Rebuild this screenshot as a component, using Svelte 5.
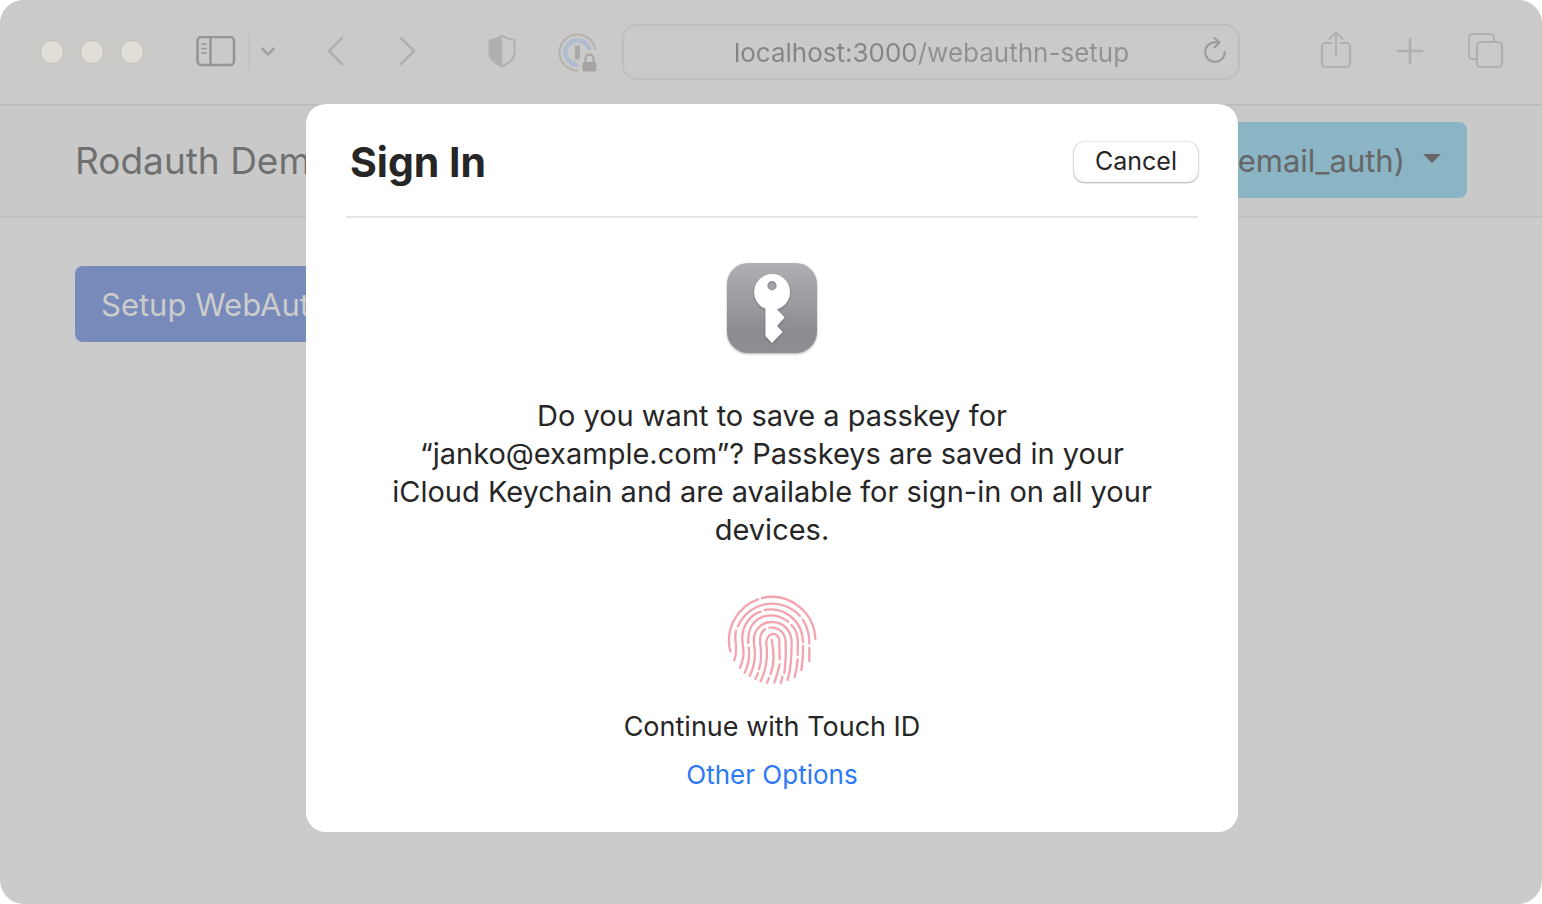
<script>
  let account = 'janko@example.com';
</script>

<div class="window">
  <header class="toolbar">
    <div class="lights"><i></i><i></i><i></i></div>
    <button class="tool sidebar" aria-label="Show sidebar">
      <svg width="40" height="32" viewBox="0 0 40 32" fill="none" stroke="currentColor" stroke-linecap="round">
        <rect x="1.5" y="1" width="36.500" height="28" rx="4" stroke-width="2.6" />
        <path d="M14.500 1.500v27" stroke-width="2.400" />
        <path d="M6 8h4M6 12.500h4M6 17h4" stroke-width="1.700" />
      </svg>
    </button>
    <span class="rule"></span>
    <button class="tool groups" aria-label="Tab groups">
      <svg width="16" height="12" viewBox="0 0 16 12" fill="none" stroke="currentColor" stroke-width="2.800" stroke-linecap="round" stroke-linejoin="round"><path d="M2.500 3 8 8.500 13.500 3" /></svg>
    </button>
    <button class="tool back" aria-label="Back">
      <svg width="20" height="32" viewBox="0 0 20 32" fill="none" stroke="currentColor" stroke-width="2.600" stroke-linecap="round" stroke-linejoin="round"><path d="M16 3 3 16l13 13" /></svg>
    </button>
    <button class="tool forward" aria-label="Forward">
      <svg width="20" height="32" viewBox="0 0 20 32" fill="none" stroke="currentColor" stroke-width="2.600" stroke-linecap="round" stroke-linejoin="round"><path d="m4 3 13 13L4 29" /></svg>
    </button>
    <button class="tool shield" aria-label="Privacy report">
      <svg width="28" height="34" viewBox="0 0 28 34">
        <path d="M14 1.500C17 4 22 5.300 25.500 6q1 .3 1 1.500v12c0 6-6 9.500-12.500 13C7.500 29 1.500 25.500 1.500 19.500v-12Q1.500 6.300 2.500 6C6 5.300 11 4 14 1.500z" fill="none" stroke="currentColor" stroke-width="2" stroke-linejoin="round" />
        <path d="M14 1.500v31C7.500 29 1.500 25.500 1.500 19.500v-12Q1.500 6.300 2.500 6C6 5.300 11 4 14 1.500z" fill="currentColor" />
      </svg>
    </button>
    <button class="tool pass" aria-label="Password manager, locked">
      <svg width="40" height="40" viewBox="0 0 40 40">
        <circle cx="19.500" cy="19.500" r="18" fill="none" stroke="#b3b2b0" stroke-width="2" />
        <circle cx="19.500" cy="19.500" r="12.200" fill="none" stroke="#b0bccf" stroke-width="4.500" />
        <rect x="17" y="12.500" width="5" height="14" fill="#aaa9a7" />
        <path d="M20 40V28q0-2 4-4v-3q1-4 5-4h11v23z" fill="#cbcac8" />
        <rect x="24.500" y="29" width="14" height="9.500" rx="2" fill="#a5a4a3" />
        <path d="M27.500 29v-3.500a4 4 0 0 1 8 0V29" fill="none" stroke="#a5a4a3" stroke-width="2" />
      </svg>
    </button>
    <div class="address">
      <input aria-label="Address" value="localhost:3000/webauthn-setup" />
      <button class="tool reload" aria-label="Reload">
        <svg width="24" height="28" viewBox="0 0 24 28" fill="none" stroke="currentColor" stroke-width="2" stroke-linecap="round" stroke-linejoin="round"><path d="M21.800 16A9.800 9.800 0 1 1 12 6.200h4.500M11.500 2l5 4.500-5 5" /></svg>
      </button>
    </div>
    <div class="actions">
      <button class="tool" aria-label="Share">
        <svg width="32" height="40" viewBox="0 0 32 40" fill="none" stroke="currentColor" stroke-width="2.200" stroke-linecap="round" stroke-linejoin="round"><path d="M11 12H5.500A3.500 3.500 0 0 0 2 15.500v17A3.500 3.500 0 0 0 5.500 36h21a3.500 3.500 0 0 0 3.500-3.500v-17a3.500 3.500 0 0 0-3.500-3.500H21M16 23V2M9.500 8 16 1.500 22.500 8" /></svg>
      </button>
      <button class="tool" aria-label="New tab">
        <svg width="28" height="28" viewBox="0 0 28 28" fill="none" stroke="currentColor" stroke-width="2.600" stroke-linecap="round"><path d="M14 2v24M2 14h24" /></svg>
      </button>
      <button class="tool" aria-label="Show all tabs">
        <svg width="36" height="36" viewBox="0 0 36 36" fill="none" stroke="currentColor" stroke-width="2.200"><rect x="9" y="9" width="25" height="25" rx="3.500" /><path d="M8.500 26H4.500A3.500 3.500 0 0 1 1 22.500V4.500A3.500 3.500 0 0 1 4.500 1h18A3.500 3.500 0 0 1 26 4.500v4" /></svg>
      </button>
    </div>
  </header>

  <nav class="navbar">
    <a class="brand" href="#home">Rodauth Demo</a>
    <button class="account">(email_auth)
      <svg width="18" height="9" viewBox="0 0 18 9"><path d="M0 0h18L9 9z" fill="currentColor" /></svg>
    </button>
  </nav>
  <main class="content">
    <button class="setup">Setup WebAuthn</button>
  </main>

  <div class="sheet-layer">
    <div class="sheet" role="dialog" aria-modal="true" aria-labelledby="sheet-title">
      <div class="sheet-head">
        <h1 id="sheet-title">Sign In</h1>
        <button class="cancel">Cancel</button>
      </div>
      <svg class="key" width="96" height="96" viewBox="0 0 96 96" aria-hidden="true">
        <defs>
          <linearGradient id="tile" x2="0" y2="1"><stop offset="0" stop-color="#b0afb4" /><stop offset=".75" stop-color="#8d8c92" /><stop offset="1" stop-color="#8e8d93" /></linearGradient>
          <filter id="soft" x="-20%" y="-20%" width="140%" height="140%"><feDropShadow dx="0" dy="1" stdDeviation="1" flood-opacity=".3" /></filter>
        </defs>
        <rect x="3" y="3" width="90" height="90" rx="21" fill="url(#tile)" filter="url(#soft)" />
        <path d="M48 14a18 18 0 0 0-6.500 34.700V76L48 83l10.500-11-5.500-6 7.500-8.500-7.500-8.200A18 18 0 0 0 48 14zm0 7a4.700 4.700 0 1 1 0 9.400 4.700 4.700 0 0 1 0-9.400z" fill="#fff" fill-rule="evenodd" filter="url(#soft)" />
      </svg>
      <p class="message">Do you want to save a passkey for “{account}”? Passkeys are saved in your iCloud Keychain and are available for sign-in on all your devices.</p>
      <svg class="finger" width="104" height="100" viewBox="0 0 312 300" fill="none" stroke="#f3a4ae" stroke-width="7" stroke-linecap="round" aria-hidden="true">
        <path d="M31 184A131 131 0 0 1 114 28M126 24A131 131 0 0 1 286 148" />
        <path d="M54 109A112 112 0 0 1 240 78M248 89Q268 118 268 160M268 174V213M48 123C40 155 57 170 43 211" />
        <path d="M122 65C87 76 65 112 67 149 68 178 78 190 60 234M134 60C190 50 247 88 249 156M249 168Q250 205 244 240" />
        <path d="M85 159C80 78 154 56 204 95M214 105C239 130 233 160 233 195M233 208Q231 235 224 261M86 173C90 200 88 220 74 248" />
        <path d="M89 257C104 230 108 205 103 168 94 120 125 96 156 96 190 96 215 122 215 158 215 210 213 235 203 270" />
        <path d="M135 118C119 129 119 148 121 165 125 195 124 218 117 238M114 250l-8 17M148 113C180 110 197 132 197 160 198 205 196 228 193 249M187 260l-4 19" />
        <path d="M122 274C140 235 143 205 140 170 132 124 178 120 178 155L179 208M179 223Q173 252 163 278M155 150C163 190 162 225 152 252M147 264l-6 14" />
      </svg>
      <p class="touch">Continue with Touch ID</p>
      <a class="other" href="#options">Other Options</a>
    </div>
  </div>
</div>

<style>
  :global(body) { margin: 0; background: #fff; }
  .window { position: relative; box-sizing: border-box; min-height: 100vh; border-radius: 24px; overflow: hidden; background: #cbcbcb; font-family: Inter, "Liberation Sans", sans-serif; }
  button, input { font: inherit; border: 0; background: none; padding: 0; margin: 0; }
  a { text-decoration: none; }
  svg { display: block; flex: none; }
  .toolbar { display: flex; align-items: center; box-sizing: border-box; height: 106px; padding: 0 38px 2px 40px; background: #cbcac8; border-bottom: 2px solid #bcbebe; }
  .lights { display: flex; gap: 16px; margin-top: 2px; }
  .lights i { width: 24px; height: 24px; border-radius: 50%; background: #e1ded8; box-sizing: border-box; border: 1px solid #c4c1bb; }
  .tool { color: #b1b0ae; flex: none; }
  .sidebar { margin: 2px 0 0 52px; color: #969593; }
  .rule { width: 2px; height: 36px; margin-left: 12px; background: #c4c3c1; }
  .groups { margin: 2px 0 0 10px; color: #a3a2a0; }
  .back { margin-left: 50px; }
  .forward { margin-left: 51px; }
  .shield { margin-left: 71px; }
  .pass { margin: 3px 0 0 42px; }
  .address { display: flex; align-items: center; flex: 1; box-sizing: border-box; height: 56px; margin: 2px 0 0 24px; padding: 0 11px 0 12px; border: 2px solid #c0bfbd; border-radius: 15px; }
  .address input { flex: 1; min-width: 0; padding-left: 24px; text-align: center; font-size: 26px; color: transparent; background: linear-gradient(90deg, #858483 49%, #92918f 49%); background-clip: text; outline: 0; }
  .reload { margin-bottom: 4px; color: #9b9a98; }
  .actions { display: flex; align-items: center; gap: 44px; margin-left: 80px; }
  .navbar { display: flex; align-items: center; justify-content: space-between; box-sizing: border-box; height: 112px; padding: 0 75px 2px; background: #c9c9c9; border-bottom: 2px solid #c0c0c0; }
  .brand { font-size: 37px; color: #707070; }
  .account { display: flex; align-items: center; gap: 18px; height: 76px; padding: 0 26px; border-radius: 8px; background: #8bb4c5; color: #666; font-size: 31px; }
  .account svg { margin-bottom: 4px; }
  .content { padding: 48px 75px; }
  .setup { height: 76px; padding: 0 26px; border-radius: 8px; background: #778ab9; color: #ccc; font-size: 31px; }
  .sheet-layer { position: absolute; inset: 104px 0 auto; display: flex; justify-content: center; padding-left: 2px; }
  .sheet { display: flex; flex-direction: column; align-items: center; box-sizing: border-box; width: 932px; max-width: 100%; padding: 0 40px 41px; background: #fff; border-radius: 20px; color: #262626; }
  .sheet-head { display: flex; justify-content: space-between; align-items: center; align-self: stretch; box-sizing: border-box; height: 114px; padding-left: 4px; border-bottom: 2px solid #e5e5e5; }
  h1 { margin: 4px 0 0; font-size: 41px; line-height: 52px; font-weight: 700; }
  .cancel { height: 40px; padding: 0 21px 2px; border-radius: 10px; background: #fff; box-shadow: 0 0 2px rgba(0,0,0,.3), 0 1px 2px rgba(0,0,0,.25); color: #262626; font-size: 25px; margin-top: 4px; }
  .key { margin-top: 42px; }
  .message { margin: 41px 0 0; padding: 0 40px; font-size: 29px; line-height: 38px; text-align: center; }
  .finger { margin-top: 41px; }
  .touch { margin: 19px 0 0; font-size: 27px; line-height: 36px; }
  .other { margin-top: 14px; font-size: 26px; line-height: 32px; color: #2d78f5; }
</style>
